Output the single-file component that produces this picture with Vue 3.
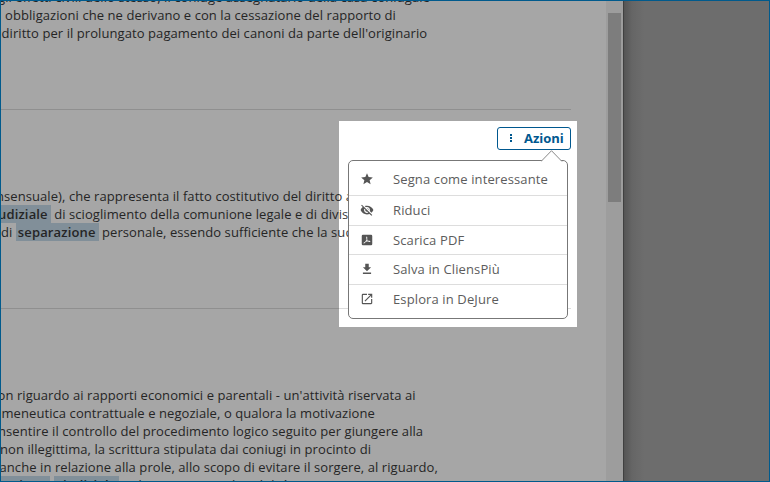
<script setup>
const sections = [
  {
    id: 'canoni',
    lines: [
      { x: -2, parts: [{ t: 'gli effetti civili dello stesso, il coniuge assegnatario della casa coniugale' }] },
      { x: 5, parts: [{ t: 'obbligazioni che ne derivano e con la cessazione del rapporto di' }] },
      { x: 1.5, parts: [{ t: 'diritto per il prolungato pagamento dei canoni da parte dell\'originario' }] },
    ],
  },
  {
    id: 'comunione',
    lines: [
      { x: -4, parts: [{ t: 'nsensuale), che rappresenta il fatto costitutivo del diritto a' }] },
      { x: -15, parts: [{ t: 'giudiziale', mark: true }, { t: ' di scioglimento della comunione legale e di divis' }] },
      { x: 1, parts: [{ t: 'di ' }, { t: 'separazione', mark: true }, { t: ' personale, essendo sufficiente che la suc' }] },
    ],
  },
  {
    id: 'rapporti',
    lines: [
      { x: -2.5, parts: [{ t: 'on riguardo ai rapporti economici e parentali - un\'attività riservata ai' }] },
      { x: 1.5, parts: [{ t: 'meneutica contrattuale e negoziale, o qualora la motivazione' }] },
      { x: -2, parts: [{ t: 'nsentire il controllo del procedimento logico seguito per giungere alla' }] },
      { x: 0, parts: [{ t: 'non illegittima, la scrittura stipulata dai coniugi in procinto di' }] },
      { x: -0.5, parts: [{ t: 'anche in relazione alla prole, allo scopo di evitare il sorgere, al riguardo,' }] },
      { x: -32.5, parts: [{ t: 'separazione', mark: true }, { t: ' ' }, { t: 'giudiziale', mark: true }, { t: ' e di conseguenza la validità' }] },
    ],
  },
]
const actions = [
  { label: 'Segna come interessante', icon: 'star' },
  { label: 'Riduci', icon: 'hide' },
  { label: 'Scarica PDF', icon: 'pdf' },
  { label: 'Salva in CliensPiù', icon: 'download' },
  { label: 'Esplora in DeJure', icon: 'open' },
]
const paths = {
  star: 'M12 17.27 18.18 21l-1.64-7.03L22 9.24l-7.19-.61L12 2 9.19 8.63 2 9.24l5.46 4.73L5.82 21z',
  hide: 'M12 7c2.76 0 5 2.24 5 5 0 .65-.13 1.26-.36 1.83l2.92 2.92c1.51-1.26 2.7-2.89 3.43-4.75-1.73-4.39-6-7.5-11-7.5-1.4 0-2.74.25-3.98.7l2.16 2.16C10.74 7.13 11.35 7 12 7zM2 4.27l2.28 2.28.46.46C3.08 8.3 1.78 10.02 1 12c1.73 4.39 6 7.5 11 7.5 1.55 0 3.03-.3 4.38-.84l.42.42L19.73 22 21 20.73 3.27 3 2 4.27zM7.53 9.8l1.55 1.55c-.05.21-.08.43-.08.65 0 1.66 1.34 3 3 3 .22 0 .44-.03.65-.08l1.55 1.55c-.67.33-1.41.53-2.2.53-2.76 0-5-2.24-5-5 0-.79.2-1.53.53-2.2zm4.31-.78 3.15 3.15.02-.16c0-1.66-1.34-3-3-3l-.17.01z',
  pdf: 'M5 3h14a2 2 0 0 1 2 2v14a2 2 0 0 1-2 2H5a2 2 0 0 1-2-2V5a2 2 0 0 1 2-2zm6.2 3c-1 1.200-.2 4 .2 5.200L8.600 15.400C6.500 16 5.600 17.200 6.300 17.900c.9.7 2.300-.5 3.400-2.300l4-1.100c1.500.9 3.400 1.100 3.900.3.600-1.300-1.200-1.700-3.300-1.500-1-.7-1.700-1.700-2.100-2.700.5-2 .5-4.600-1-4.600zm.9 6.500 1.200 1.300-2.100.6z',
  download: 'M19 9h-4V3H9v6H5l7 7 7-7zM5 18v2.500h14V18H5z',
  open: 'M19 19H5V5h7V3H5a2 2 0 0 0-2 2v14a2 2 0 0 0 2 2h14c1.100 0 2-.9 2-2v-7h-2v7zM14 3v2h3.590l-9.830 9.830 1.410 1.410L19 6.410V10h2V3h-7z',
}
</script>

<template>
  <div class="screen">
    <main class="panel">
      <div class="content">
        <section v-for="s in sections" :key="s.id" :class="['entry', s.id]">
          <p v-for="(line, i) in s.lines" :key="i" :style="{ textIndent: line.x + 'px' }">
            <span v-for="(p, j) in line.parts" :key="j" :class="{ mark: p.mark }">{{ p.t }}</span>
          </p>
        </section>
      </div>
      <div class="track"><div class="thumb"></div></div>
    </main>
    <aside class="backdrop"></aside>
    <div class="spotlight"></div>
    <div class="actions">
      <button class="trigger" type="button">
        <span class="dots"><i></i><i></i><i></i></span>
        <span class="caption">Azioni</span>
      </button>
      <ul class="menu">
        <li v-for="a in actions" :key="a.icon">
          <svg :class="a.icon" viewBox="0 0 24 24"><path :d="paths[a.icon]" fill-rule="evenodd" /></svg>
          <span>{{ a.label }}</span>
        </li>
      </ul>
      <svg class="arrow" viewBox="0 0 22 12"><path d="M0 11.500 10.500 .7 21 11.500" /></svg>
    </div>
    <div class="frame"></div>
  </div>
</template>

<style>
body { margin: 0; overflow: hidden; }
</style>

<style scoped>
* { box-sizing: border-box; }
.screen {
  position: relative;
  display: flex;
  width: 770px;
  height: 482px;
  overflow: hidden;
  font-family: "Open Sans", sans-serif;
  font-size: 13px;
  color: #3a3a3a;
}
.panel {
  display: flex;
  width: 624px;
  height: 482px;
  border-right: 1px solid #636363;
  background: #fff;
}
.content {
  width: 606px;
  height: 482px;
  padding-right: 35px;
  overflow: hidden;
  letter-spacing: 0.075px;
}
.entry { height: 199px; padding-top: 77px; border-bottom: 1px solid #dcdcdc; }
.entry.canoni { height: 110px; padding-top: 0; }
.entry.canoni p:first-child { height: 6px; display: flex; align-items: flex-end; }
.entry.rapporti { border-bottom: 0; }
p { height: 18px; margin: 0; line-height: 18px; white-space: pre; }
.mark {
  display: inline-block;
  height: 18px;
  padding: 0 3px 0 2px;
  text-indent: 0;
  font-weight: 600;
  letter-spacing: 0.14px;
  background: #c6dcec;
}
.track { width: 17px; padding: 13px 2px 0; background: #f1f1f1; }
.thumb { height: 189px; background: #c1c1c1; }
.backdrop { flex: 1; background: linear-gradient(90deg, #828282, #9c9c9c 8px, #a8a8a8 20px); }
.spotlight {
  position: absolute;
  left: 339px;
  top: 121px;
  width: 238px;
  height: 206px;
  box-shadow: 0 0 0 800px rgba(0, 0, 0, 0.35);
}
.actions {
  position: absolute;
  left: 348px;
  top: 127px;
  display: flex;
  flex-direction: column;
  width: 223px;
}
.trigger {
  display: flex;
  align-self: flex-end;
  align-items: center;
  gap: 12px;
  width: 74px;
  height: 23px;
  padding: 0 0 0 12px;
  border: 1px solid #00588f;
  border-radius: 3px;
  background: #fff;
  font: 700 13px "Open Sans", sans-serif;
  color: #00588f;
}
.caption { padding-bottom: 2px; }
.dots { display: flex; flex-direction: column; gap: 1px; padding-bottom: 1px; }
.dots i { width: 2px; height: 2px; background: #00588f; }
.menu {
  width: 220px;
  height: 159px;
  margin: 10px 0 0;
  padding: 0;
  border: 1px solid #777;
  border-radius: 5px;
  background: #fff;
  list-style: none;
  color: #5c5c5c;
  letter-spacing: 0.12px;
}
.menu li { display: flex; align-items: center; height: 30px; padding: 0 0 2px 11px; border-bottom: 1px solid #ddd; }
.menu li:first-child { height: 35px; padding-top: 2px; padding-bottom: 0; }
.menu li:nth-child(3) { height: 29px; padding-bottom: 0; }
.menu li:last-child { border-bottom: 0; }
.menu svg { width: 14px; height: 14px; margin-right: 19px; fill: #555; }
.arrow { position: absolute; left: 193px; top: 23px; width: 22px; height: 12px; fill: #fff; stroke: #888; }
.frame { position: absolute; inset: 0; border: 1px solid #005a8c; }
</style>
